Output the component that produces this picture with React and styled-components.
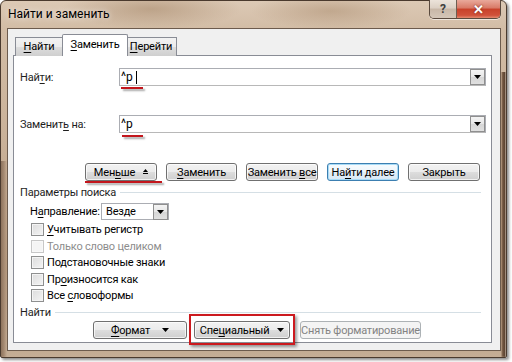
import React from 'react'
import styled, { createGlobalStyle, css } from 'styled-components';

const UI_FONT = `Roboto, "Noto Sans", "Liberation Sans", sans-serif`;
const UI_SIZE = '11px';

const GlobalStyle = createGlobalStyle`
  html, body {
    margin: 0;
    padding: 0;
    background: #ffffff;
  }
  body {
    font-family: ${UI_FONT};
    font-size: ${UI_SIZE};
    letter-spacing: -0.2px;
    color: #000;
  }
`

const Page = styled.div`
  width: 512px;
  height: 362px;
  background: #fff;
  overflow: hidden;
`

const Window = styled.div`
  width: 507px;
  height: 358px;
  box-sizing: border-box;
  display: flex;
  flex-direction: column;
  border: 1px solid #4a3a2e;
  border-radius: 6px 6px 2px 2px;
  background:
    linear-gradient(to left, #e6d8ca 0, #5c4330 1px, #6e5440 3px, #8a6d55 4px, transparent 5px) right bottom / 100% 80% no-repeat,
    linear-gradient(to right, #8d735d 0, #a58a72 3px, transparent 6px) left bottom / 100% 55% no-repeat,
    radial-gradient(ellipse 90px 20px at 150px 8px, rgba(165,135,105,.55), transparent),
    radial-gradient(ellipse 80px 18px at 330px 10px, rgba(170,140,110,.5), transparent),
    linear-gradient(to bottom, #dcc9b5 0%, #d2bca5 8%, #c9b198 40%, #b89c80 75%, #c4ad95 100%);
  box-shadow: 2px 2px 3px rgba(0,0,0,.45);
`

const TitleBar = styled.div`
  height: 27px;
  display: flex;
  align-items: flex-start;
  padding-left: 7px;
`

const Title = styled.div`
  flex: 1;
  line-height: 27px;
  font-size: 12px;
  letter-spacing: 0;
  color: #000;
  text-shadow: 0 0 6px rgba(255,255,255,.9);
`

const Controls = styled.div`
  display: flex;
  margin-right: 5px;
  margin-top: -1px;
  border: 1px solid #5a4a3e;
  border-top: none;
  border-radius: 0 0 5px 5px;
  overflow: hidden;
  box-shadow: 0 1px 0 rgba(255,255,255,.6);
`

const CtrlButton = styled.div`
  height: 18px;
  width: ${p => p.$w}px;
  display: flex;
  align-items: center;
  justify-content: center;
  font-weight: bold;
  ${p => p.$close ? css`
    background: linear-gradient(to bottom, #e9a99b 0%, #d87966 45%, #c8412a 50%, #d0523b 85%, #e48a70 100%);
    color: #fff;
    font-size: 13px;
    text-shadow: 0 0 2px #6a1d10;
  ` : css`
    background: linear-gradient(to bottom, #ece3da 0%, #dcd0c4 45%, #c8b7a7 50%, #d4c6b8 100%);
    color: #3f3f3f;
    font-size: 12px;
    border-right: 1px solid #6e5e52;
  `}
`

const Client = styled.div`
  flex: 1;
  margin: 0 5px 6px 6px;
  background: #f0f0f0;
  border: 1px solid #6c5b4d;
  padding: 5px 8px 7px 5px;
  display: flex;
  flex-direction: column;
`

const TabStrip = styled.div`
  display: flex;
  align-items: flex-end;
  padding-left: 2px;
  position: relative;
  z-index: 1;
  margin-bottom: -1px;
`

const Tab = styled.div`
  box-sizing: border-box;
  width: ${p => p.$w}px;
  text-align: center;
  border: 1px solid #898c95;
  border-bottom: none;
  color: #000;
  ${p => p.$active ? css`
    height: 22px;
    line-height: 19px;
    background: #fff;
    margin: 0 -2px;
    border-radius: 2px 2px 0 0;
    z-index: 2;
    position: relative;
  ` : css`
    height: 19px;
    line-height: 18px;
    background: linear-gradient(to bottom, #f2f2f2 0%, #ebebeb 50%, #dddddd 51%, #cfcfcf 100%);
  `}
  & + & { margin-left: -1px; }
`

const Key = styled.span`
  text-decoration: underline;
  text-underline-offset: 2px;
`

const Text = styled.span`
  white-space: nowrap;
`

const TabPanel = styled.div`
  flex: 1;
  background: #fff;
  border: 1px solid #898c95;
  padding: 12px 5px 0 3px;
  display: flex;
  flex-direction: column;
`

const FieldRow = styled.div`
  display: flex;
  align-items: center;
  height: 18px;
  margin-top: ${p => p.$mt}px;
`

const FieldLabel = styled.div`
  width: 102px;
  padding-left: 3px;
  box-sizing: border-box;
  color: #1e1e1e;
  white-space: nowrap;
`

const TextBox = styled.div`
  flex: 1;
  height: 18px;
  box-sizing: border-box;
  position: relative;
  border: 1px solid #abadb3;
  border-bottom-color: #b8b8b8;
  display: flex;
  align-items: center;
  padding-left: 1px;
`

const TextValue = styled.span`
  font-size: 12px;
  line-height: 16px;
  letter-spacing: 0;
`

const Caret = styled.span`
  display: inline-block;
  width: 1px;
  height: 13px;
  background: #000;
  margin-left: 3px;
`

const DropButton = styled.div`
  margin-left: auto;
  width: 15px;
  height: 16px;
  box-sizing: border-box;
  border: 1px solid #8f8f8f;
  background: linear-gradient(to bottom, #f4f4f4 0%, #e6e6e6 50%, #d6d6d6 51%, #e0e0e0 100%);
  display: flex;
  align-items: center;
  justify-content: center;
`

const Arrow = () => (
  <svg width="7" height="4" viewBox="0 0 7 4"><path d="M0 0h7L3.5 4z" fill="#000" /></svg>
);

const RedMark = styled.div`
  position: absolute;
  left: ${p => p.$left}px;
  top: calc(100% + ${p => p.$top}px);
  width: ${p => p.$w}px;
  height: 2px;
  background: #c3161c;
  box-shadow: 2px 2px 2px rgba(0,0,0,.35);
  pointer-events: none;
`

const ButtonRow = styled.div`
  display: flex;
  gap: ${p => p.$gap || 9}px;
  height: 18px;
  margin-top: ${p => p.$mt}px;
  justify-content: ${p => p.$start ? 'flex-start' : 'flex-end'};
  padding-left: ${p => p.$pl || 0}px;
  padding-right: 6px;
`

const Button = styled.div`
  position: relative;
  box-sizing: border-box;
  width: ${p => p.$w}px;
  height: 18px;
  border-radius: 3px;
  display: flex;
  align-items: center;
  justify-content: center;
  gap: ${p => p.$gap || 8}px;
  font-size: ${UI_SIZE};
  border: 1px solid #707070;
  color: #000;
  background: linear-gradient(to bottom, #f2f2f2 0%, #ebebeb 50%, #dddddd 51%, #cfcfcf 100%);
  box-shadow: inset 0 0 0 1px rgba(255,255,255,.7);
  ${p => p.$default && css`
    border-color: #3c7fb1;
    background: linear-gradient(to bottom, #f7fbfe 0%, #eef6fb 50%, #e2eef7 51%, #d9e9f5 100%);
    box-shadow: inset 0 0 0 1px #a8dbf6;
  `}
  ${p => p.$disabled && css`
    border-color: #adb2b5;
    background: #f4f4f4;
    color: #838383;
    box-shadow: none;
  `}
`

const Less = () => (
  <svg width="5" height="6" viewBox="0 0 5 6"><path d="M0 3h5L2.5 0z" fill="#000" /><rect x="0" y="4" width="5" height="1" fill="#000" /></svg>
);

const RedBox = styled.div`
  position: absolute;
  left: -6px;
  right: -6px;
  top: -8px;
  bottom: -7px;
  border: 2px solid #cc1a1f;
  box-shadow: 2px 2px 3px rgba(0,0,0,.4);
  pointer-events: none;
`

const GroupHeader = styled.div`
  display: flex;
  align-items: center;
  gap: 4px;
  height: 12px;
  margin-top: ${p => p.$mt}px;
  padding-left: 3px;
  padding-right: 5px;
  color: #1e1e1e;
  white-space: nowrap;
  &::after {
    content: '';
    flex: 1;
    height: 1px;
    background: #d5dfe5;
  }
`

const DirectionRow = styled.div`
  display: flex;
  align-items: center;
  height: 17px;
  margin-top: 5px;
  padding-left: 13px;
`

const DirectionLabel = styled.div`
  width: 71px;
  white-space: nowrap;
`

const Combo = styled.div`
  width: 68px;
  height: 17px;
  box-sizing: border-box;
  border: 1px solid #abadb3;
  display: flex;
  align-items: center;
  padding-left: 4px;
`

const CheckList = styled.div`
  display: flex;
  flex-direction: column;
  margin-top: 1.5px;
  padding-left: 14px;
`

const CheckRow = styled.div`
  display: flex;
  align-items: center;
  height: 16.5px;
  gap: 3px;
  color: ${p => p.$disabled ? '#8d8d8d' : '#000'};
`

const Box = styled.div`
  width: 13px;
  height: 13px;
  box-sizing: border-box;
  border: 1px solid ${p => p.$disabled ? '#c7c7c7' : '#8e8f8f'};
  background: ${p => p.$disabled
    ? '#f4f4f4'
    : 'linear-gradient(135deg, #dcdcdc 0%, #f4f4f4 100%)'};
  box-shadow: inset 0 0 0 1px ${p => p.$disabled ? '#f8f8f8' : '#f4f4f4'};
`

const options = [
  { text: <><Key>У</Key>читывать регистр</> },
  { text: 'Только слово целиком', disabled: true },
  { text: 'Подстановочные знаки' },
  { text: <>Пр<Key>о</Key>износится как</> },
  { text: <>Все <Key>с</Key>ловоформы</> },
];

const App = () => {
  return (
    <Page>
      <GlobalStyle />
      <Window>
        <TitleBar>
          <Title>Найти и заменить</Title>
          <Controls>
            <CtrlButton $w={26}>?</CtrlButton>
            <CtrlButton $w={43} $close>✕</CtrlButton>
          </Controls>
        </TitleBar>
        <Client>
          <TabStrip>
            <Tab $w={48}><Key>Н</Key>айти</Tab>
            <Tab $w={66} $active><Key>З</Key>аменить</Tab>
            <Tab $w={52}><Key>П</Key>ерейти</Tab>
          </TabStrip>
          <TabPanel>
            <FieldRow $mt={0}>
              <FieldLabel>Най<Key>т</Key>и:</FieldLabel>
              <TextBox>
                <TextValue>^p</TextValue>
                <Caret />
                <DropButton><Arrow /></DropButton>
                <RedMark $left={1} $top={2} $w={22} />
              </TextBox>
            </FieldRow>
            <FieldRow $mt={29}>
              <FieldLabel>Заменит<Key>ь</Key> на:</FieldLabel>
              <TextBox>
                <TextValue>^p</TextValue>
                <DropButton><Arrow /></DropButton>
                <RedMark $left={2} $top={3} $w={21} />
              </TextBox>
            </FieldRow>
            <ButtonRow $mt={30}>
              <Button $w={72}>
                <Text>Мен<Key>ь</Key>ше</Text>
                <Less />
                <RedMark $left={-1} $top={1} $w={77} />
              </Button>
              <Button $w={71}><Text><Key>З</Key>аменить</Text></Button>
              <Button $w={72}><Text>Заменить <Key>в</Key>се</Text></Button>
              <Button $w={72} $default><Text>На<Key>й</Key>ти далее</Text></Button>
              <Button $w={72}><Text>Закрыть</Text></Button>
            </ButtonRow>
            <GroupHeader $mt={5}>Параметры поиска</GroupHeader>
            <DirectionRow>
              <DirectionLabel>Н<Key>а</Key>правление:</DirectionLabel>
              <Combo>
                <Text>Везде</Text>
                <DropButton><Arrow /></DropButton>
              </Combo>
            </DirectionRow>
            <CheckList>
              {options.map((o, i) => (
                <CheckRow key={i} $disabled={o.disabled}>
                  <Box $disabled={o.disabled} />
                  <Text>{o.text}</Text>
                </CheckRow>
              ))}
            </CheckList>
            <GroupHeader $mt={2}>Найти</GroupHeader>
            <ButtonRow $mt={3} $start $pl={76} $gap={7}>
              <Button $w={94} $gap={12}><Text><Key>Ф</Key>ормат</Text><Arrow /></Button>
              <Button $w={96} style={{ marginRight: 3 }}>
                <Text>Спе<Key>ц</Key>иальный</Text>
                <Arrow />
                <RedBox />
              </Button>
              <Button $w={121} $disabled><Text>Снять форматирование</Text></Button>
            </ButtonRow>
          </TabPanel>
        </Client>
      </Window>
    </Page>
  );
}

export default App;
